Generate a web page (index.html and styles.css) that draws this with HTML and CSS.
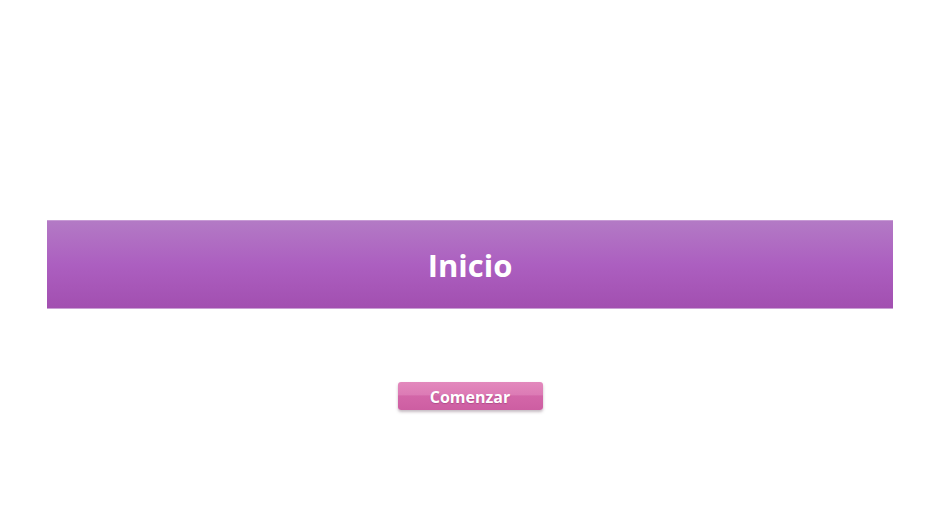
FILE: index.html
```html
<!DOCTYPE html>
<html lang="es">
<head>
<meta charset="utf-8">
<title>Inicio</title>
<link rel="stylesheet" href="styles.css">
</head>
<body>
<main class="page">
  <header class="banner"><h1 class="banner-title">Inicio</h1></header>
  <button class="start-btn" type="button">Comenzar</button>
</main>
</body>
</html>
```
FILE: styles.css
```css
html, body {
  margin: 0;
  padding: 0;
  background: #ffffff;
}
.page {
  width: 940px;
  height: 528px;
  display: flex;
  flex-direction: column;
  align-items: center;
  padding-top: 220px;
  box-sizing: border-box;
  font-family: "Open Sans", "Noto Sans", sans-serif;
}
.banner {
  width: 846px;
  height: 89px;
  align-self: flex-start;
  margin-left: 47px;
  background: linear-gradient(to bottom, #b37ac5 0%, #ac5fc0 50%, #a24fb0 100%);
  border-top: 1px solid #c79ad4;
  border-bottom: 1px solid #c9a0d4;
  box-sizing: border-box;
  display: flex;
  align-items: center;
  justify-content: center;
}
.banner-title {
  margin: 0;
  color: #ffffff;
  font-size: 31px;
  font-weight: 700;
  line-height: 1;
  padding-top: 2px;
}
.start-btn {
  margin-top: 73px;
  width: 145px;
  height: 28px;
  border: none;
  border-radius: 3px;
  padding: 2px 0 0;
  color: #ffffff;
  font-family: inherit;
  font-size: 16px;
  font-weight: 700;
  background: linear-gradient(to bottom, #e389bd 0%, #dc7bb5 45%, #d366a8 50%, #cd5ea2 100%);
  box-shadow: 0 2px 3px rgba(90, 60, 80, 0.35);
  text-shadow: 0 1px 1px rgba(120, 40, 90, 0.35);
  cursor: pointer;
}
```
